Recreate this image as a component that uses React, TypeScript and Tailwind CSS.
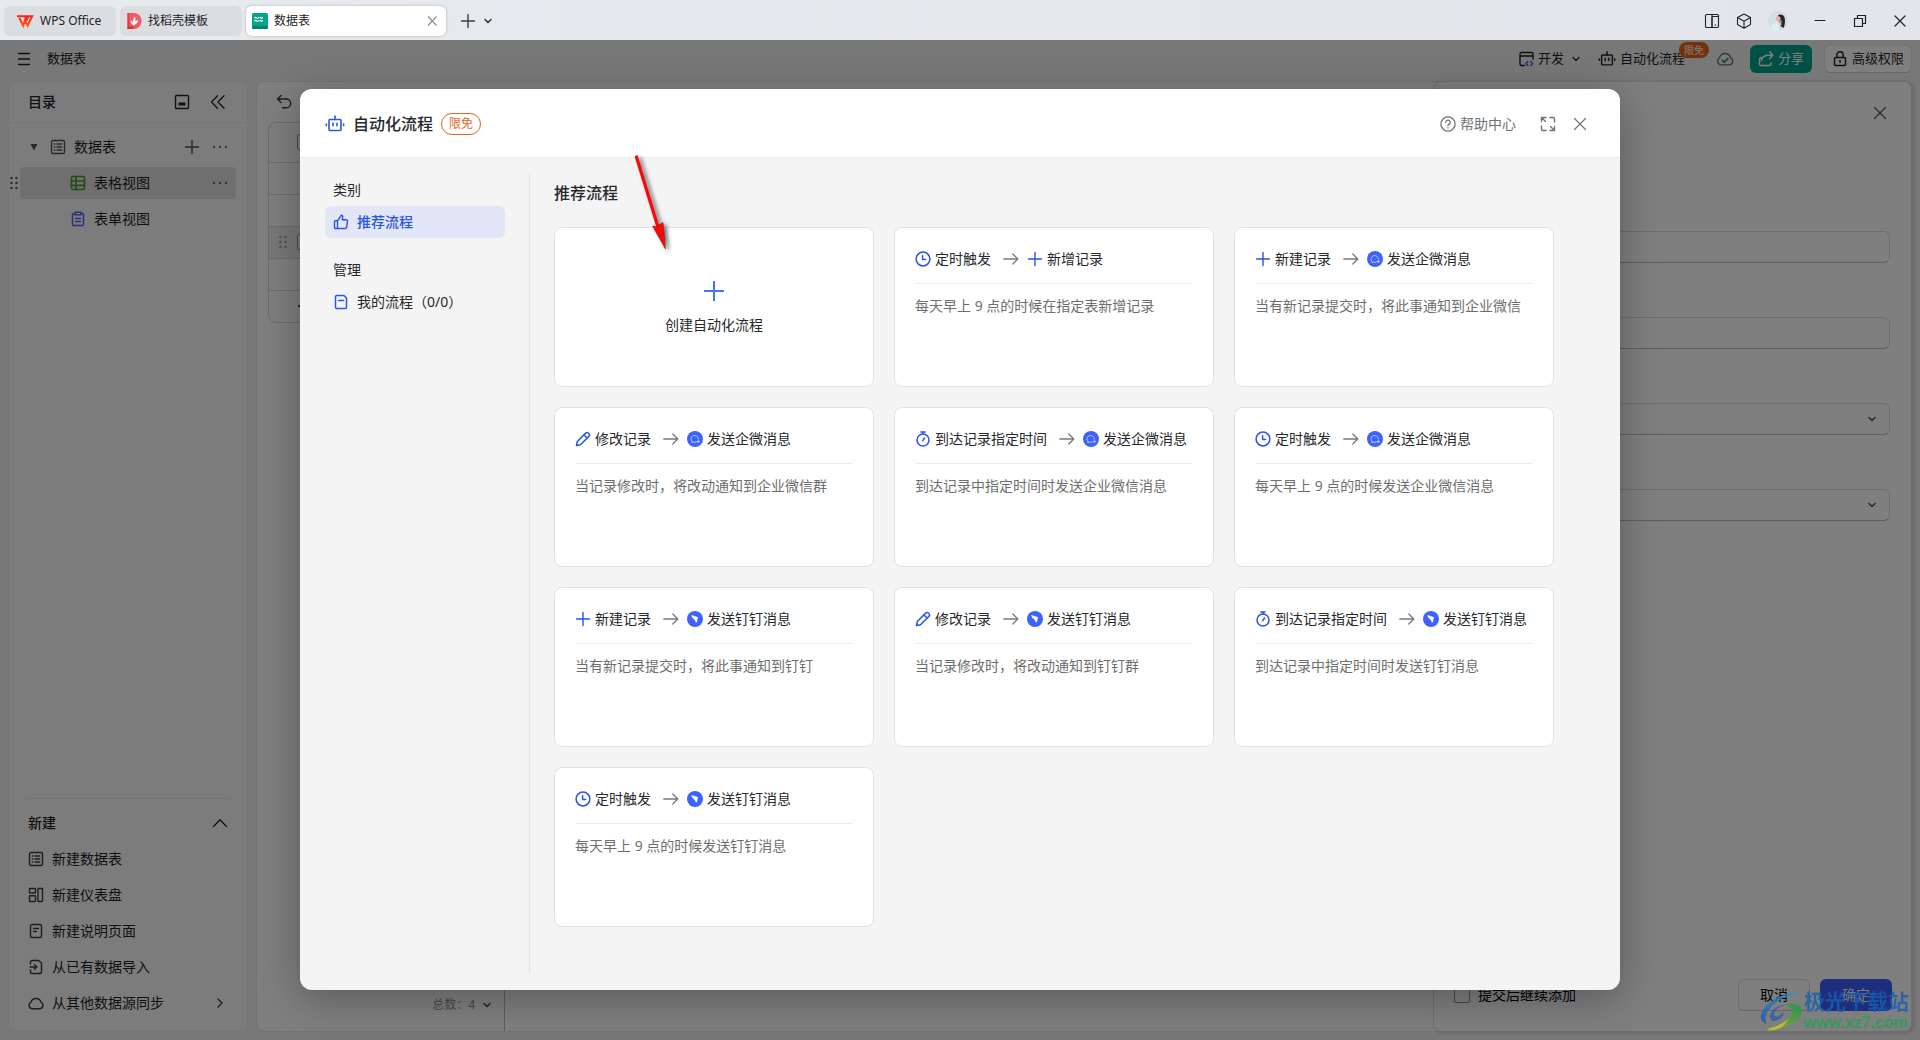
import React from "react";

type IconProps = { className?: string; children: React.ReactNode; w?: number };

function Icon({ className = "", children, w = 1.2 }: IconProps) {
  return (
    <svg
      viewBox="0 0 16 16"
      fill="none"
      stroke="currentColor"
      strokeWidth={w}
      strokeLinecap="round"
      strokeLinejoin="round"
      aria-hidden="true"
      className={"size-4 shrink-0 " + className}
    >
      {children}
    </svg>
  );
}

const CloseIcon = ({ className = "" }: { className?: string }) => (
  <Icon className={className}>
    <path d="M2.5 2.5l11 11M13.5 2.5l-11 11" />
  </Icon>
);
const ChevronDown = ({ className = "", w = 1.5 }: { className?: string; w?: number }) => (
  <Icon className={className} w={w}>
    <path d="M5 6.5l3 3 3-3" />
  </Icon>
);
const PlusIcon = ({ className = "" }: { className?: string }) => (
  <Icon className={className} w={1.4}>
    <path d="M8 1.5v13M1.5 8h13" />
  </Icon>
);
const DotsIcon = ({ className = "" }: { className?: string }) => (
  <Icon className={className}>
    <g fill="currentColor" stroke="none">
      <circle cx="2" cy="8" r="1.1" />
      <circle cx="8" cy="8" r="1.1" />
      <circle cx="14" cy="8" r="1.1" />
    </g>
  </Icon>
);
const GripIcon = ({ className = "" }: { className?: string }) => (
  <svg viewBox="0 0 10 16" fill="currentColor" aria-hidden="true" className={"h-4 w-[10px] shrink-0 " + className}>
    {[3, 8, 13].map((y) => (
      <g key={y}>
        <circle cx="2.5" cy={y} r="1.3" />
        <circle cx="7.5" cy={y} r="1.3" />
      </g>
    ))}
  </svg>
);
const TableIcon = ({ className = "" }: { className?: string }) => (
  <Icon className={className} w={1.4}>
    <rect x="1.5" y="1.5" width="13" height="13" rx="1.5" />
    <path d="M4.3 5h.6M4.3 8h.6M4.3 11h.6M7 5h4.7M7 8h4.7M7 11h4.7" />
  </Icon>
);
const RobotIcon = ({ className = "" }: { className?: string }) => (
  <svg
    viewBox="0 0 20 20"
    fill="none"
    stroke="currentColor"
    strokeWidth="1.6"
    strokeLinecap="round"
    aria-hidden="true"
    className={"shrink-0 " + className}
  >
    <rect x="4" y="5.5" width="12" height="11" rx="1" />
    <path d="M10 2v3.5M8 9.2v2.6M12 9.2v2.6M1.4 10v1.5M18.6 10v1.5" />
  </svg>
);

const ClockIcon = () => (
  <Icon w={1.5}>
    <circle cx="8" cy="8" r="6.9" />
    <path d="M7.6 4.8v3.8h3" />
  </Icon>
);
const PencilIcon = () => (
  <Icon w={1.5}>
    <path d="M10.9 1.9a1.6 1.6 0 0 1 2.3 0l.9.9a1.6 1.6 0 0 1 0 2.3l-8.600 8.600-4 .8.8-4zM9 4l3 3" />
  </Icon>
);
const StopwatchIcon = () => (
  <Icon w={1.5}>
    <circle cx="8" cy="9" r="6" />
    <path d="M5.800 1.100h4.400M8 1.200v1.600M9.600 7l-1.900 2.600" />
  </Icon>
);
const WecomIcon = () => (
  <svg viewBox="0 0 16 16" fill="none" aria-hidden="true" className="size-4 shrink-0">
    <circle cx="8" cy="8" r="8" fill="#3c63ff" />
    <path
      d="M9.300 11.100c-.9.300-2 .3-2.900 0l-1.500.7.2-1.500a3.700 3.400 0 1 1 6.300-2.300"
      stroke="#c3cffc"
      strokeWidth=".9"
      strokeLinecap="round"
      strokeLinejoin="round"
    />
    <path d="M11.300 9.200v2.600M10 10.500h2.600" stroke="#c3cffc" strokeWidth=".9" strokeLinecap="round" />
  </svg>
);
const DingIcon = () => (
  <svg viewBox="0 0 16 16" aria-hidden="true" className="size-4 shrink-0">
    <circle cx="8" cy="8" r="8" fill="#3c63ff" />
    <path d="M4.300 4c2.200.9 4.300 1.200 6.200 2.100.5.300.5.800.3 1.300L9.900 9.400h.9L8.700 12.200l.3-1.700h-1l.4-1.300-1.400-.2.6-.5C5.800 7.700 4.500 6 4.300 4z" fill="#fff" />
  </svg>
);
const ArrowIcon = () => (
  <Icon className="ml-3 mr-2 text-[#7a7a7a]" w={1.3}>
    <path d="M.8 8h14M9.800 3l5 5-5 5" />
  </Icon>
);

type Kind = "clock" | "plus" | "pencil" | "stopwatch" | "wecom" | "ding";

function StepIcon({ kind }: { kind: Kind }) {
  if (kind === "clock") return <ClockIcon />;
  if (kind === "plus") return <PlusIcon />;
  if (kind === "pencil") return <PencilIcon />;
  if (kind === "stopwatch") return <StopwatchIcon />;
  if (kind === "wecom") return <WecomIcon />;
  return <DingIcon />;
}

type Flow = { from: [Kind, string]; to: [Kind, string]; desc: string };

const flows: Flow[] = [
  { from: ["clock", "定时触发"], to: ["plus", "新增记录"], desc: "每天早上 9 点的时候在指定表新增记录" },
  { from: ["plus", "新建记录"], to: ["wecom", "发送企微消息"], desc: "当有新记录提交时，将此事通知到企业微信" },
  { from: ["pencil", "修改记录"], to: ["wecom", "发送企微消息"], desc: "当记录修改时，将改动通知到企业微信群" },
  { from: ["stopwatch", "到达记录指定时间"], to: ["wecom", "发送企微消息"], desc: "到达记录中指定时间时发送企业微信消息" },
  { from: ["clock", "定时触发"], to: ["wecom", "发送企微消息"], desc: "每天早上 9 点的时候发送企业微信消息" },
  { from: ["plus", "新建记录"], to: ["ding", "发送钉钉消息"], desc: "当有新记录提交时，将此事通知到钉钉" },
  { from: ["pencil", "修改记录"], to: ["ding", "发送钉钉消息"], desc: "当记录修改时，将改动通知到钉钉群" },
  { from: ["stopwatch", "到达记录指定时间"], to: ["ding", "发送钉钉消息"], desc: "到达记录中指定时间时发送钉钉消息" },
  { from: ["clock", "定时触发"], to: ["ding", "发送钉钉消息"], desc: "每天早上 9 点的时候发送钉钉消息" },
];

function Step({ step }: { step: [Kind, string] }) {
  return (
    <span className="flex items-center gap-1 whitespace-nowrap text-[#2a55e5]">
      <StepIcon kind={step[0]} />
      <span className="text-[#26282c]">{step[1]}</span>
    </span>
  );
}

function FlowCard({ flow }: { flow: Flow }) {
  return (
    <button className="flex h-40 flex-col rounded-lg border border-[#e1e1e1] bg-white px-5 text-left text-sm">
      <span className="flex w-full items-center border-b border-[#ededed] pb-[14px] pt-[21px]">
        <Step step={flow.from} />
        <ArrowIcon />
        <Step step={flow.to} />
      </span>
      <span className="mt-3 text-[#6e6e6e]">{flow.desc}</span>
    </button>
  );
}

function TitleBar() {
  return (
    <header className="flex h-10 items-center gap-1 bg-gradient-to-r from-[#e7ebee] to-[#e4e5ea] pl-1 pr-3 pt-0.5 text-xs text-[#1f2226]">
      <button className="flex h-[30px] w-28 items-center gap-[6px] rounded-md bg-[#dadee1] pl-3">
        <svg viewBox="0 0 18 14" aria-hidden="true" className="h-[14px] w-[18px]">
          <defs>
            <linearGradient id="wps" x1="0" y1="0" x2="0" y2="1">
              <stop offset="0" stopColor="#f81f1f" />
              <stop offset="1" stopColor="#ff5a1e" />
            </linearGradient>
          </defs>
          <path
            d="M1 2.200h9.300L7.200 11.700 3.300 4M8.300 5.500l3.400 6.200L16 2.300h-3.600l-2 4.600"
            fill="none"
            stroke="url(#wps)"
            strokeWidth="2.100"
          />
        </svg>
        WPS Office
      </button>
      <button className="flex h-[30px] w-[122px] items-center gap-[6px] rounded-md bg-[#dadee1] pl-[6px]">
        <svg viewBox="0 0 16 16" aria-hidden="true" className="size-4">
          <path d="M1.500 0H8a7.500 7.800 0 0 1 7.500 8A7.500 7.800 0 0 1 8 16H1.500z" fill="#f45b61" />
          <path d="M1.500 0H3v16H1.500z" fill="#e0343f" />
          <path d="M2 13.500h6.500L6 16H1.500z" fill="#d42f3a" />
          <path d="M7.200 12.400c-1.600-1.500-2.500-3-2.500-4.900 1.300.4 2.100 1.300 2.600 2.500-.4-2.600.2-4.800 1.600-6.400.9 1.800.8 3.500.1 5.400.7-1 1.600-1.700 3-1.900 0 2.600-1.600 4.600-4.800 5.300z" fill="#fff" />
        </svg>
        找稻壳模板
      </button>
      <div className="flex h-[30px] w-[200px] items-center gap-[6px] rounded-md bg-white pl-[6px] pr-[7px] shadow-[0_0_3px_rgba(0,0,0,0.25)]">
        <svg viewBox="0 0 16 16" aria-hidden="true" className="size-4">
          <rect width="16" height="16" rx="1.500" fill="#05a28c" />
          <path d="M0 13h16v1.500a1.500 1.500 0 0 1-1.500 1.500h-13A1.500 1.500 0 0 1 0 14.500z" fill="#04816f" />
          <path
            d="M2.500 5.300c.8-1.200 1.500-1 2.100-.4s1.300.6 2.100-.6M7.600 5.300c.6-1.200 1.100-1 1.500-.4s1 .6 1.600-.6M2.500 8.300c.8-1.200 1.500-1 2.100-.4s1.300.6 2.100-.6M7.600 8.300c.6-1.200 1.100-1 1.500-.4s1 .6 1.600-.6"
            fill="none"
            stroke="#fff"
            strokeWidth="1.200"
          />
        </svg>
        <span className="flex-1">数据表</span>
        <button aria-label="关闭标签" className="text-[#8b8e92]">
          <svg viewBox="0 0 14 14" fill="none" stroke="currentColor" strokeWidth="1.200" className="size-[14px]">
            <path d="M3 2.500l8.500 9M11.500 2.500l-8.500 9" />
          </svg>
        </button>
      </div>
      <button aria-label="新建标签" className="ml-[10px] text-[#3d4044]">
        <PlusIcon />
      </button>
      <button aria-label="标签列表">
        <ChevronDown w={1.300} />
      </button>
      <div className="ml-auto flex items-center">
        <button aria-label="分屏" className="mr-4">
          <Icon w={1.100}>
            <path d="M8 14.500H2.500A1 1 0 0 1 1.500 13.500v-11a1 1 0 0 1 1-1H8z" />
            <path d="M8 1.500h5.500a1 1 0 0 1 1 1v11a1 1 0 0 1-1 1H8M8 14.500V4.500a1 1 0 0 1 1-1h5M11 12h1" />
          </Icon>
        </button>
        <button aria-label="应用" className="mr-4">
          <Icon w={1.100}>
            <path d="M8 1l6.500 3.600v6.900L8 15.200l-6.500-3.700V4.600zM1.500 4.600L8 8.200l6.500-3.600M8 8.200v7" />
          </Icon>
        </button>
        <button aria-label="账户" className="mr-6">
          <svg viewBox="0 0 20 20" className="size-5">
            <clipPath id="face">
              <circle cx="10" cy="10" r="10" />
            </clipPath>
            <g clipPath="url(#face)">
              <rect width="20" height="20" fill="#cfdfe3" />
              <path d="M10 4.500c2.300-2.200 6.200-1 6.800 3 .4 3.600.2 6.800-1.400 9.500l-3-2-1-5z" fill="#2b2228" />
              <path d="M8 6.800c1-2 4-2.300 4.600 0 .2 2-1.200 3.600-2.600 3.800-1.600-.4-2.300-2-2-3.800z" fill="#dfb3a6" />
              <path d="M2.500 17c1.500-4 4-6 7.500-6l1.500 9H4z" fill="#deeef2" />
              <path d="M11.800 9.500l1.600-.4.200 4.500-1.400 2.500z" fill="#c8a79f" />
            </g>
          </svg>
        </button>
        <button aria-label="最小化" className="mr-6">
          <Icon w={1.100}>
            <path d="M3 7.500h10" />
          </Icon>
        </button>
        <button aria-label="还原" className="mr-6">
          <Icon w={1.200}>
            <path d="M5.500 5V2.500h8v8H11M2.500 5.500h8v8h-8z" strokeLinejoin="miter" />
          </Icon>
        </button>
        <button aria-label="关闭窗口">
          <Icon w={1.200}>
            <path d="M3 3l10 10M13 3L3 13" />
          </Icon>
        </button>
      </div>
    </header>
  );
}

function AppHeader() {
  return (
    <div className="flex h-[41px] items-center pb-[3px] pl-4 pr-2 text-[13px] text-[#1f2226]">
      <button aria-label="菜单" className="mr-[15px]">
        <Icon w={1.500}>
          <path d="M2 2.500h12M2 8h12M2 13.500h12" strokeLinecap="butt" />
        </Icon>
      </button>
      <span>数据表</span>
      <div className="ml-auto flex items-center">
        <button className="mr-[14px] flex items-center gap-1">
          <Icon w={1.400}>
            <path d="M6.500 14.500h-3A1.500 1.500 0 0 1 2 13V3a1.500 1.500 0 0 1 1.500-1.500h10A1.500 1.500 0 0 1 15 3v5M2 5h13" />
            <path d="M9.800 10.500l-1.800 2 1.800 2M12.800 10.500l1.800 2-1.800 2" stroke="#3355f0" />
          </Icon>
          开发
          <ChevronDown w={1.200} />
        </button>
        <button className="relative mr-[31px] flex items-center gap-1">
          <RobotIcon className="size-[18px]" />
          自动化流程
          <span className="absolute -right-6 -top-[7px] rounded-full bg-[#e8610f] px-[5px] text-[10px] font-medium leading-4 text-[#f5e6e6]">
            限免
          </span>
        </button>
        <button aria-label="已保存到云端" className="mr-4 text-[#6c6e72]">
          <svg viewBox="0 0 18 16" fill="none" stroke="currentColor" strokeWidth="1.300" className="h-4 w-[18px]">
            <path d="M4.800 13.800a3.800 3.800 0 0 1-1.200-7.100 5.600 5.600 0 0 1 10.900.2 3.600 3.600 0 0 1-1.100 6.900z" />
            <path d="M6 9l2.300 2.200 4-4" stroke="#1fa35f" strokeWidth="1.800" />
          </svg>
        </button>
        <button className="mr-3 flex h-7 items-center gap-1 rounded-md bg-[#00a38a] px-2 text-white">
          <Icon w={1.500}>
            <path d="M3 6.500a2 2 0 0 0-1.500 2v4.500a1.500 1.500 0 0 0 1.500 1.500h8.500a1.500 1.500 0 0 0 1.500-1.500v-1M3.500 9.500c.5-3.500 3-5.200 7-5.200h4M11.800 1l3 3.300-3 3.300" />
          </Icon>
          分享
        </button>
        <button className="flex h-7 items-center gap-1 rounded-md border border-[#e4e4e4] border-b-[#d0d0d0] bg-white px-[7px]">
          <Icon w={1.400}>
            <rect x="2.500" y="6.500" width="11" height="8" rx="1" />
            <path d="M4.800 6.500V4a3.200 3.200 0 0 1 6.400 0v2.500M8 9.500v2" />
          </Icon>
          高级权限
        </button>
      </div>
    </div>
  );
}

const createItems: { label: string; icon: React.ReactNode; more?: boolean }[] = [
  { label: "新建数据表", icon: <TableIcon /> },
  {
    label: "新建仪表盘",
    icon: (
      <Icon w={1.400}>
        <rect x="1.500" y="1.500" width="6" height="4.500" rx=".4" />
        <rect x="1.500" y="8.800" width="6" height="5.700" rx=".4" />
        <rect x="10" y="1.500" width="4.500" height="13" rx=".4" />
      </Icon>
    ),
  },
  {
    label: "新建说明页面",
    icon: (
      <Icon w={1.400}>
        <rect x="2.500" y="1.500" width="11" height="13" rx="1.500" />
        <path d="M5.500 5.500h5M5.500 8.500h3" />
      </Icon>
    ),
  },
  {
    label: "从已有数据导入",
    icon: (
      <Icon w={1.400}>
        <path d="M2.500 5V3A1.500 1.500 0 0 1 4 1.500h6.500L13.500 4v9a1.500 1.500 0 0 1-1.500 1.500H4A1.500 1.500 0 0 1 2.500 13v-2M2 8h6.500M6.500 5.800L8.800 8l-2.300 2.200" />
      </Icon>
    ),
  },
  {
    label: "从其他数据源同步",
    icon: (
      <Icon w={1.400}>
        <path d="M4 13.800A3.500 3.500 0 0 1 3 7.200a5.200 5.200 0 0 1 10 0 3.500 3.500 0 0 1-1 6.600z" />
      </Icon>
    ),
    more: true,
  },
];

function Sidebar() {
  return (
    <aside className="flex w-[240px] shrink-0 flex-col rounded-lg border border-[#ececec] bg-[#f9f9f9] text-sm text-[#1f2226]">
      <div className="flex h-[41px] items-center border-b border-[#ececec] pl-[19px] pr-[21px]">
        <h2 className="flex-1 font-medium">目录</h2>
        <button aria-label="收纳" className="mr-5">
          <Icon w={1.400}>
            <rect x="1.500" y="1.500" width="13" height="13" rx="1" />
            <rect x="4.500" y="8.500" width="7" height="3" fill="currentColor" stroke="none" />
          </Icon>
        </button>
        <button aria-label="折叠目录">
          <Icon w={1.300}>
            <path d="M7.500 1.800L1.500 8l6 6.200M14 1.800L8 8l6 6.200" />
          </Icon>
        </button>
      </div>
      <nav className="mt-2 flex flex-col gap-1">
        <div className="flex h-8 items-center pl-5 pr-[19px]">
          <svg viewBox="0 0 10 10" className="mr-[11px] size-[10px]" aria-hidden="true">
            <path d="M1.500 2h7L5 8.500z" fill="#505256" />
          </svg>
          <TableIcon className="text-[#505256]" />
          <span className="ml-2 flex-1">数据表</span>
          <button aria-label="添加视图" className="mr-3 text-[#505256]">
            <PlusIcon />
          </button>
          <button aria-label="更多" className="text-[#505256]">
            <DotsIcon />
          </button>
        </div>
        <div className="flex items-center pr-[11px]">
          <GripIcon className="mr-px text-[#606266]" />
          <div className="flex h-8 flex-1 items-center rounded bg-[#dedede] pl-[50px] pr-2">
            <Icon className="text-[#4c9a2a]" w={1.700}>
              <rect x="1.500" y="1.500" width="13" height="13" rx="1.500" />
              <path d="M6 1.500v13M1.500 6h13M1.500 10.300h13" />
            </Icon>
            <span className="ml-2 flex-1">表格视图</span>
            <button aria-label="更多操作" className="text-[#505256]">
              <DotsIcon />
            </button>
          </div>
        </div>
        <a href="#form" className="flex h-8 items-center gap-2 pl-[61px]">
          <Icon className="text-[#4a68e8]" w={1.500}>
            <path d="M5 2.500H3.500A1 1 0 0 0 2.500 3.500v10a1 1 0 0 0 1 1h9a1 1 0 0 0 1-1v-10a1 1 0 0 0-1-1H11M5 1.200h6v2.600H5zM5.500 7.500h5M5.500 10.500h5" />
          </Icon>
          表单视图
        </a>
      </nav>
      <div className="mt-auto px-[19px] pb-[10px]">
        <button className="flex w-full items-center justify-between border-t border-[#e6e6e6] pb-2 pt-[14px] font-medium">
          新建
          <Icon w={1.300}>
            <path d="M1.500 11.500L8 4.800l6.500 6.700" />
          </Icon>
        </button>
        <ul>
          {createItems.map((it) => (
            <li key={it.label}>
              <button className="flex h-9 w-full items-center gap-2 text-[#3a3c40]">
                {it.icon}
                <span className="flex-1 text-left text-[#1f2226]">{it.label}</span>
                {it.more && (
                  <Icon w={1.400}>
                    <path d="M6 4l4 4-4 4" />
                  </Icon>
                )}
              </button>
            </li>
          ))}
        </ul>
      </div>
    </aside>
  );
}

function Box({ label, className = "" }: { label: string; className?: string }) {
  return (
    <input
      type="checkbox"
      aria-label={label}
      className={"block size-4 shrink-0 appearance-none rounded-xs border border-[#8a8c90] bg-white " + className}
    />
  );
}

const rowClasses = ["h-8 bg-white", "h-8 bg-white", "h-8 bg-[#f0f0f0]", "h-8 bg-white"];

function Workspace() {
  return (
    <section className="flex min-w-0 flex-1 rounded-lg border border-[#e6e6e6] bg-white">
      <div className="flex min-w-0 flex-1 flex-col">
        <div className="flex h-10 items-center pl-[19px] text-[#3a3c40]">
          <button aria-label="撤销">
            <Icon w={1.400}>
              <path d="M5 1.500L1.500 5 5 8.500M1.500 5h8.800a4.300 4.300 0 0 1 0 8.800H6.500" />
            </Icon>
          </button>
        </div>
        <div className="ml-[11px] overflow-hidden rounded-lg border border-[#d8d8d8]">
          <table className="w-full border-collapse">
            <tbody>
              <tr className="h-[39px] border-b border-[#d8d8d8]">
                <td className="pl-7">
                  <Box label="全选" />
                </td>
              </tr>
              {rowClasses.map((cls, i) => (
                <tr key={i} className={cls + " border-b border-[#d8d8d8]"}>
                  <td className="pl-[9px]">
                    {i === 2 && (
                      <span className="flex items-center gap-[9px]">
                        <GripIcon className="text-[#a4a6aa]" />
                        <Box label="选择记录" />
                      </span>
                    )}
                  </td>
                </tr>
              ))}
              <tr className="h-8">
                <td className="pl-7">
                  <button aria-label="添加记录" className="block">
                    <PlusIcon />
                  </button>
                </td>
              </tr>
            </tbody>
          </table>
        </div>
        <div className="mt-auto flex h-[52px] w-[248px] items-center justify-end gap-1 border-r border-[#bdbdbd] pr-[9px] text-xs text-[#8f9195]">
          总数：4
          <ChevronDown className="text-[#505256]" w={1.600} />
        </div>
      </div>
      <aside className="-my-px -mr-px flex w-[479px] shrink-0 flex-col rounded-lg border border-[#dcdcdc] bg-white pl-5 pr-[21px] pt-[23px] text-sm shadow-[2px_1px_4px_rgba(0,0,0,0.15)]">
        <button aria-label="关闭面板" className="mr-[2px] self-end text-[#505256]">
          <CloseIcon />
        </button>
        <form className="mt-[110px] flex flex-col gap-[54px]" onSubmit={(e) => e.preventDefault()}>
          {["文本", "数字"].map((l) => (
            <input key={l} aria-label={l} className="h-8 rounded-md border border-[#dcdcdc] border-b-[#bcbcbc] bg-white px-3" />
          ))}
          {["单选项", "多选项"].map((l) => (
            <div key={l} className="relative">
              <select aria-label={l} className="block h-8 w-full appearance-none rounded-md border border-[#dcdcdc] border-b-[#bcbcbc] bg-white px-3" />
              <ChevronDown className="absolute right-[10px] top-2 text-[#505256]" w={1.600} />
            </div>
          ))}
        </form>
        <div className="-mr-[2px] mt-auto flex items-center gap-[10px] pb-5">
          <label className="mr-auto flex items-center gap-2">
            <Box label="提交后继续添加" />
            提交后继续添加
          </label>
          <button className="h-8 w-[72px] rounded-md border border-[#dcdcdc] border-b-[#cccccc]">取消</button>
          <button className="h-8 w-[72px] rounded-md bg-[#3d5af8] text-[#f0f0f0]">确定</button>
        </div>
      </aside>
    </section>
  );
}

function AutomationDialog() {
  return (
    <div
      role="dialog"
      aria-labelledby="dialog-title"
      className="relative flex w-full max-w-[1320px] flex-col overflow-hidden rounded-xl bg-[#f4f4f4] text-sm text-[#26282c] shadow-[0_8px_40px_rgba(0,0,0,0.3)]"
    >
      <div className="flex h-[69px] items-center border-b border-[#ececec] bg-white pl-[25px] pr-8 pt-0.5">
        <RobotIcon className="size-5 text-[#2a55e5]" />
        <h1 id="dialog-title" className="ml-2 text-base font-medium">
          自动化流程
        </h1>
        <span className="ml-2 rounded-full border border-[#e0651e] px-[7px] text-xs leading-5 text-[#e0651e]">限免</span>
        <div className="ml-auto flex items-center text-[#707274]">
          <a href="#help" className="flex items-center gap-1">
            <Icon w={1.300}>
              <circle cx="8" cy="8" r="7.100" />
              <path d="M5.800 6.300a2.200 2.200 0 1 1 3.100 2c-.6.300-.9.700-.9 1.300M8 11.600v.4" />
            </Icon>
            帮助中心
          </a>
          <button aria-label="全屏" className="ml-6">
            <Icon w={1.400}>
              <path d="M1.500 5.500v-4H6M2 2l3.500 3.500M10 1.500h3a1.500 1.500 0 0 1 1.500 1.500v3M1.500 10v3A1.500 1.500 0 0 0 3 14.500h3M14.500 10.500v4H10M14 14l-3.500-3.500" />
            </Icon>
          </button>
          <button aria-label="关闭对话框" className="ml-4">
            <CloseIcon />
          </button>
        </div>
      </div>
      <div className="flex flex-1 py-4">
        <nav className="w-[230px] shrink-0 border-r border-[#e4e4e4] pl-[25px] pr-6">
          <h3 className="pl-2 pt-[6px]">类别</h3>
          <a href="#recommended" className="mt-[6px] flex h-8 items-center gap-2 rounded-md bg-[#e2e6f6] pl-2 font-medium text-[#2a55e5]">
            <Icon w={1.400}>
              <path d="M4.500 6.800L8.200 1.300c1.300.2 1.700 1 1.500 2L9.200 5.800h4a1.300 1.300 0 0 1 1.300 1.500l-.9 6a1.500 1.500 0 0 1-1.500 1.200H2.500a1 1 0 0 1-1-1V7.800a1 1 0 0 1 1-1h2v7.500" />
            </Icon>
            推荐流程
          </a>
          <h3 className="pl-2 pt-[22px]">管理</h3>
          <a href="#mine" className="mt-[6px] flex h-8 items-center gap-2 pl-2">
            <Icon className="text-[#2a55e5]" w={1.500}>
              <path d="M3.800 1.500h7.200l2.500 2.500v9.200a1.300 1.300 0 0 1-1.300 1.300H3.800a1.300 1.300 0 0 1-1.300-1.300V2.800a1.300 1.300 0 0 1 1.300-1.300zM5.500 6.500h5" />
            </Icon>
            我的流程（0/0）
          </a>
        </nav>
        <section className="min-w-0 flex-1 pl-6 pr-[66px]">
          <h2 className="pt-[7px] text-base font-medium">推荐流程</h2>
          <div className="mt-[22px] grid grid-cols-3 gap-5">
            <button className="flex h-40 flex-col items-center justify-center gap-[14px] rounded-lg border border-[#e1e1e1] bg-white pt-0.5">
              <svg viewBox="0 0 20 20" className="size-5" stroke="#4a72ea" strokeWidth="2" aria-hidden="true">
                <path d="M10 0v20M0 10h20" />
              </svg>
              创建自动化流程
            </button>
            {flows.map((f, i) => (
              <FlowCard key={i} flow={f} />
            ))}
          </div>
        </section>
      </div>
      <svg
        viewBox="0 0 50 110"
        aria-hidden="true"
        className="pointer-events-none absolute left-[326px] top-[61px] h-[110px] w-[50px] drop-shadow-[3px_2px_2px_rgba(0,0,0,0.6)]"
      >
        <path d="M10.500 7L32 77" stroke="#fa0808" strokeWidth="3.200" strokeLinecap="round" />
        <path d="M26.500 76l4 .5 6.500-4L39.500 99z" fill="#fa0808" stroke="#8c1010" strokeWidth=".5" />
      </svg>
    </div>
  );
}

function Watermark() {
  return (
    <div className="pointer-events-none absolute bottom-2 right-[11px] flex items-end opacity-80">
      <svg viewBox="0 0 44 42" aria-hidden="true" className="h-[42px] w-[44px]">
        <defs>
          <linearGradient id="swoosh" x1="1" y1="0" x2="0" y2="1">
            <stop offset="0" stopColor="#1f9ede" />
            <stop offset="1" stopColor="#2257a5" />
          </linearGradient>
          <linearGradient id="leaf" x1="1" y1="0" x2="0" y2="1">
            <stop offset="0" stopColor="#159a50" />
            <stop offset=".6" stopColor="#5ea832" />
            <stop offset="1" stopColor="#f0d51a" />
          </linearGradient>
        </defs>
        <path d="M42 1C22 3 4 12 1 25c-1 5 2 8 6 9-3-5-1-11 4-17C18 9 29 5 42 1z" fill="url(#swoosh)" />
        <path d="M26 15c-8-1-16 6-16 12 0 5 7 5 11 1 2-2 3-4 2-6-2 4-8 6-9 3-1-4 5-9 12-10z" fill="#2560ae" />
        <path d="M25 14c10-1 18 1 17 8C40 31 25 39 7 41c11-4 24-11 25-18 0-4-3-7-7-9z" fill="url(#leaf)" />
        <path d="M6 39c9-2 17-5 22-10-3 7-10 11-16 11z" fill="#c9cf22" />
      </svg>
      <div className="font-bold">
        <div className="text-[21px] leading-[26px] text-[#1560b0]">极光下载站</div>
        <div className="font-['Liberation_Sans'] text-base leading-[18px] text-[#22a050]">www.xz7.com</div>
      </div>
    </div>
  );
}

export default function App() {
  return (
    <div className="flex min-h-screen flex-col font-['Noto_Sans','Noto_Sans_CJK_SC',sans-serif]">
      <TitleBar />
      <main className="relative flex flex-1 flex-col bg-[#f1f1f1]">
        <AppHeader />
        <div className="flex flex-1 gap-2 px-2 pb-2">
          <Sidebar />
          <Workspace />
        </div>
        <div className="absolute inset-0 flex justify-center bg-black/50 pb-[50px] pt-[49px]">
          <AutomationDialog />
        </div>
        <Watermark />
      </main>
    </div>
  );
}
